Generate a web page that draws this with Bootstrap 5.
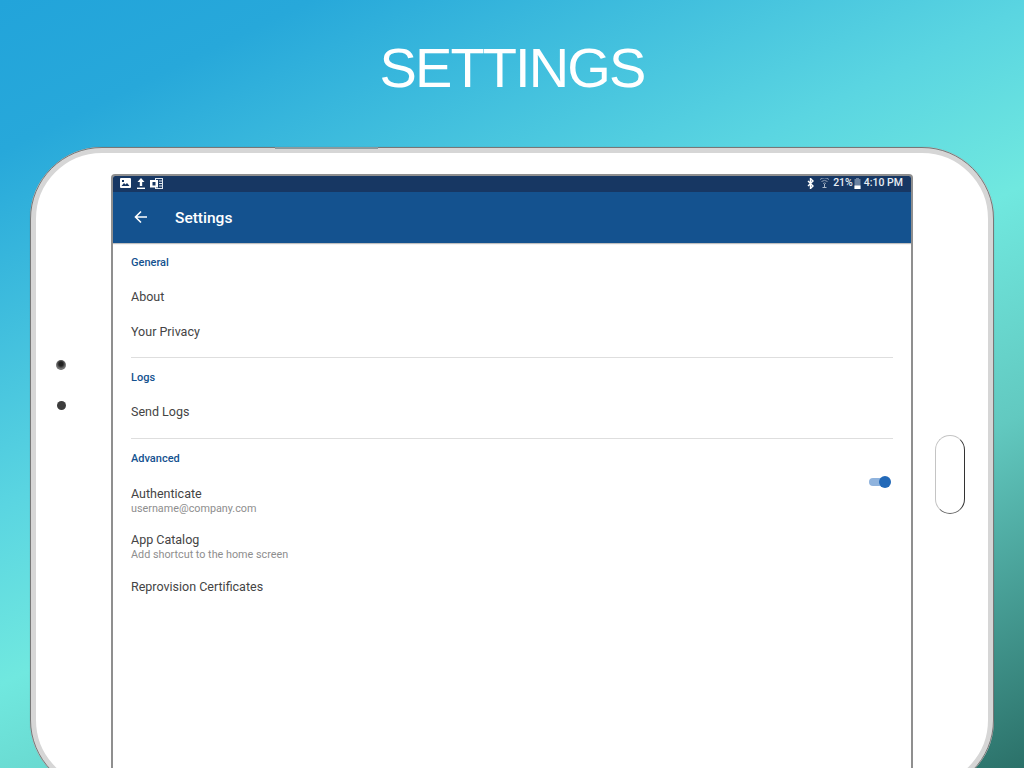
<!DOCTYPE html>
<html lang="en">
<head>
  <meta charset="UTF-8" />
  <meta name="viewport" content="width=device-width, initial-scale=1" />
  <title>Settings</title>
  <link href="https://cdn.jsdelivr.net/npm/bootstrap@5.3.3/dist/css/bootstrap.min.css" rel="stylesheet" />
  <style>
    html, body { height: 768px; overflow: hidden; }
    body {
      font-family: Roboto, "Liberation Sans", sans-serif;
      background: linear-gradient(154deg, #22a4da 0%, #27a8da 12%, #5ad5e1 40%, #70e8df 54%, #62c9c0 72%, #2b7169 100%);
    }
    .promo-title {
      height: 147px;
      padding-top: 33px;
      font-family: "Liberation Sans", sans-serif;
      font-weight: 400;
      font-size: 56px;
      letter-spacing: -1.9px;
      line-height: 70px;
      color: #fff;
    }
    .tablet-shell {
      position: relative;
      width: 964px;
      height: 645px;
      margin-left: 30px;
      background: #fff;
      border: 6px solid #d6d6d6;
      border-radius: 72px;
      outline: 1px solid rgba(95, 95, 95, .8);
      outline-offset: -1px;
      box-shadow: 0 0 1px rgba(70, 70, 70, .4);
    }
    .power-key {
      position: absolute;
      top: -6px;
      left: 239px;
      width: 103px;
      height: 2px;
      background: #8a9a9e;
    }
    .bezel-side { width: 75px; flex-shrink: 0; }
    .bezel-left { padding-top: 207px; padding-left: 20px; gap: 31px; }
    .bezel-right { padding-top: 282px; padding-left: 22px; }
    .cam-lens {
      width: 10px;
      height: 10px;
      border-radius: 50%;
      background: radial-gradient(circle at 50% 40%, #222 0 25%, #777 60%, #555 100%);
    }
    .cam-dot {
      width: 9px;
      height: 9px;
      margin-left: 1px;
      border-radius: 50%;
      background: #3d3d3d;
    }
    .home-key {
      width: 30px;
      height: 79px;
      border-radius: 15px;
      border: 1px solid #c4c4c4;
      border-right-color: #333;
      border-bottom-color: #666;
    }
    .screen-panel {
      width: 802px;
      flex-shrink: 0;
      margin-top: 21px;
      height: 618px;
      background: #fff;
      border: 2px solid #8f8f8f;
      border-bottom: 0;
      border-radius: 4px 4px 0 0;
      overflow: hidden;
    }
    .status-strip {
      height: 16px;
      background: #173763;
      color: #e8edf3;
      font-size: 10.5px;
      font-weight: 500;
      padding: 0 8px 2px 7px;
    }
    .app-header {
      height: 51px;
      background: #14528f;
      color: #fff;
      padding-left: 21px;
      box-shadow: 0 1px 1px rgba(0, 0, 0, .25);
    }
    .back-arrow { margin-bottom: 2px; }
    .app-header-title { font-size: 15.5px; font-weight: 500; margin-left: 27px; padding-top: 2px; }
    .settings-body { padding: 0 18px; }
    .group-label {
      height: 36px;
      padding-top: 11px;
      font-size: 11px;
      line-height: 18px;
      font-weight: 500;
      color: #14528f;
    }
    .group-last { height: 38px; }
    .setting-row { height: 35px; padding-top: 2px; font-size: 12.5px; color: #444; }
    .setting-row-tall { height: 46.5px; padding-top: 1px; font-size: 12.5px; color: #444; line-height: 15px; }
    .setting-row-end { height: 32px; }
    .setting-sub { margin-top: 1px; font-size: 10.8px; line-height: 14px; color: #8e8e8e; }
    .group-rule { margin: 8px 0 0; border-color: #dedede; opacity: 1; }
    .group-rule-low { margin-top: 9px; }
    .toggle-track {
      position: relative;
      width: 20px;
      height: 8px;
      margin: -38px 4px 0 0;
      border-radius: 4px;
      background: #8fb3dd;
    }
    .toggle-thumb {
      position: absolute;
      top: -2px;
      right: -2px;
      width: 12px;
      height: 12px;
      border-radius: 50%;
      background: #2269b8;
    }
    .gap-icon-a { margin-left: 6px; }
    .gap-icon-b { margin-left: 5px; }
    .gap-wifi { margin-left: 6px; }
    .gap-pct { margin-left: 4px; }
    .gap-batt { margin-left: 1px; }
    .gap-clock { margin-left: 3px; }
  </style>
</head>
<body>

  <h1 class="promo-title text-center mb-0">SETTINGS</h1>

  <div class="tablet-shell d-flex">
    <div class="power-key"></div>

    <div class="bezel-side bezel-left d-flex flex-column">
      <div class="cam-lens"></div>
      <div class="cam-dot"></div>
    </div>

    <div class="screen-panel">
      <div class="status-strip d-flex align-items-center">
        <svg width="11" height="10" viewBox="0 0 11 10"><rect width="11" height="10" rx="1" fill="#fff"/><path d="M1.5 8l2.5-3 1.5 1.5L7 5l2.5 3z" fill="#173763"/><rect x="2" y="2" width="2" height="2" fill="#173763"/></svg>
        <svg class="gap-icon-a" width="8" height="11" viewBox="0 0 8 11"><path d="M4 0L7.5 4H5.2v4H2.8V4H.5z" fill="#fff"/><rect y="9.6" width="8" height="1.4" fill="#fff"/></svg>
        <svg class="gap-icon-b" width="13" height="11" viewBox="0 0 13 11"><rect x="5.5" y="0.5" width="7" height="10" fill="none" stroke="#dfe6ee"/><path d="M9 3h3.5M9 5.5h3.5M9 8h3.5" stroke="#dfe6ee"/><rect y="2" width="8" height="7.5" fill="#fff"/><rect x="2.5" y="4" width="3" height="3.5" fill="#173763"/></svg>
        <div class="ms-auto d-flex align-items-center">
          <svg width="7" height="11" viewBox="0 0 7 11"><path d="M1 3l5 5-2.5 2.5v-10L6 3 1 8" fill="none" stroke="#fff" stroke-width="1.4"/></svg>
          <svg class="gap-wifi" width="9" height="10" viewBox="0 0 9 10"><path d="M0 1.5a7 7 0 0 1 9 0M1.5 3.5a5 5 0 0 1 6 0M3 5.5a2.5 2.5 0 0 1 3 0" fill="none" stroke="#8c9db2"/><path d="M4.5 6v4M2.5 9.5h4" stroke="#aab8c8"/></svg>
          <span class="gap-pct">21%</span>
          <svg class="gap-batt" width="7" height="11" viewBox="0 0 7 11"><rect x="0.5" y="1" width="6" height="10" fill="#6c82a0"/><rect x="2" width="3" height="1" fill="#6c82a0"/><rect x="0.5" y="7.5" width="6" height="3.5" fill="#fff"/></svg>
          <span class="gap-clock">4:10 PM</span>
        </div>
      </div>

      <div class="app-header d-flex align-items-center">
        <svg class="back-arrow" width="14" height="14" viewBox="0 0 14 14"><path d="M13 7H2M7 1.5L1.5 7 7 12.5" fill="none" stroke="#fff" stroke-width="1.6"/></svg>
        <span class="app-header-title">Settings</span>
      </div>

      <div class="settings-body">
        <div class="group-label">General</div>
        <div class="setting-row d-flex align-items-center">About</div>
        <div class="setting-row d-flex align-items-center">Your Privacy</div>
        <hr class="group-rule">

        <div class="group-label">Logs</div>
        <div class="setting-row d-flex align-items-center">Send Logs</div>
        <hr class="group-rule group-rule-low">

        <div class="group-label group-last">Advanced</div>
        <div class="setting-row-tall d-flex justify-content-between align-items-center">
          <div>Authenticate<div class="setting-sub">username@company.com</div></div>
          <span class="toggle-track"><span class="toggle-thumb"></span></span>
        </div>
        <div class="setting-row-tall d-flex align-items-center">
          <div>App Catalog<div class="setting-sub">Add shortcut to the home screen</div></div>
        </div>
        <div class="setting-row setting-row-end d-flex align-items-center">Reprovision Certificates</div>
      </div>
    </div>

    <div class="bezel-side bezel-right">
      <div class="home-key"></div>
    </div>
  </div>

  <script src="https://cdn.jsdelivr.net/npm/bootstrap@5.3.3/dist/js/bootstrap.bundle.min.js"></script>
</body>
</html>
